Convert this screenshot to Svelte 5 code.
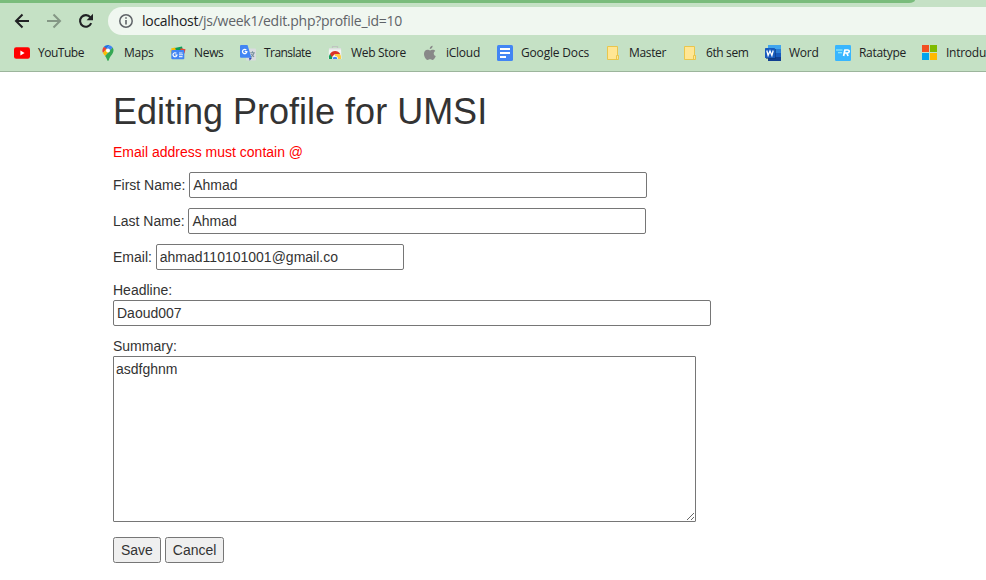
<script>
  const bookmarks = [
    { name: 'YouTube', icon: 'youtube', width: 86, text: 46 },
    { name: 'Maps', icon: 'maps', width: 70, text: 29.5 },
    { name: 'News', icon: 'news', width: 70, text: 29.5 },
    { name: 'Translate', icon: 'translate', width: 87, text: 47 },
    { name: 'Web Store', icon: 'store', width: 95, text: 55 },
    { name: 'iCloud', icon: 'apple', width: 75, text: 34 },
    { name: 'Google Docs', icon: 'docs', width: 108, text: 68 },
    { name: 'Master', icon: 'folder', width: 77, text: 37 },
    { name: '6th sem', icon: 'folder', width: 83, text: 42.5 },
    { name: 'Word', icon: 'word', width: 70, text: 29.5 },
    { name: 'Ratatype', icon: 'ratatype', width: 87, text: 47 },
    { name: 'Introdu', icon: 'microsoft', width: 64, text: 40 }
  ];

  let firstName = $state('Ahmad');
  let lastName = $state('Ahmad');
  let email = $state('ahmad110101001@gmail.co');
  let headline = $state('Daoud007');
  let summary = $state('asdfghnm');

  // Tightens the tracking of a label until it fills the given width.
  function fit(node, width) {
    const natural = node.getBoundingClientRect().width;
    node.style.letterSpacing = `${(width - natural) / node.textContent.length}px`;
  }
</script>

<div class="window">
  <header class="chrome">
    <div class="tabs"><div class="strip"></div></div>
    <div class="toolbar">
      <svg class="nav back" width="16" height="16" viewBox="0 0 16 16" fill="none" stroke="#202124" stroke-width="2"><path d="M15 8H2.5M8.5 1.5L2 8l6.500 6.500" /></svg>
      <svg class="nav forward" width="16" height="16" viewBox="0 0 16 16" fill="none" stroke="#849785" stroke-width="2"><path d="M1 8h12.500M7.500 1.500L14 8l-6.500 6.500" /></svg>
      <svg class="nav reload" width="16" height="16" viewBox="0 0 16 16"><path d="M13.200 10.200A5.800 5.800 0 1 1 12.400 4.300" fill="none" stroke="#202124" stroke-width="2.100" /><path d="M15 .8v6.400H8.600z" fill="#202124" /></svg>
      <div class="address">
        <svg width="14" height="14" viewBox="0 0 14 14"><circle cx="7" cy="7" r="6.200" fill="none" stroke="#5f6368" stroke-width="1.500" /><path d="M6.200 6h1.600v4.500H6.200zM6.200 3.300h1.600v1.500H6.200z" fill="#5f6368" /></svg>
        <span class="url" use:fit={260}><b>localhost</b>/js/week1/edit.php?profile_id=10</span>
      </div>
    </div>
    <nav class="bookmarks">
      {#each bookmarks as b}
        <div class="bookmark" style:width="{b.width}px">
          <svg width="16" height="16" viewBox="0 0 16 16">
            {#if b.icon === 'youtube'}
              <rect y="2.300" width="16" height="11.500" rx="2.200" fill="#f00" /><path d="M6.400 5.500v5L10.600 8z" fill="#fff" />
            {:else if b.icon === 'maps'}
              <path d="M8 0a5.600 5.600 0 0 0-4.300 2L6 4l3.700-3.700A6 6 0 0 0 8 0z" fill="#1a73e8" />
              <path d="M3.700 2a5.600 5.600 0 0 0-.7 6l4-4.700z" fill="#ea4335" />
              <path d="M9.700.3a5.600 5.600 0 0 1 3 2.300L9.500 6.500 6 4z" fill="#4285f4" />
              <path d="M3 8c.5 1.100 1.300 2 2.100 3L10 5.500 6.200 4.200z" fill="#fbbc04" />
              <path d="M12.700 2.600c1.500 2.500.8 4.800-.7 6.800-1.500 2-2.500 3.200-3 5.100-.2.900-.4 1.300-1 1.300s-.8-.5-1-1.300c-.4-1.400-1-2.400-1.900-3.500z" fill="#34a853" />
              <circle cx="8" cy="5.500" r="2" fill="#fff" />
            {:else if b.icon === 'news'}
              <path d="M3.500 3.200L12 1.600l1 4H4z" fill="#0c9d58" />
              <path d="M1 3.500l4-.9 1 3H2z" fill="#fbbc04" />
              <path d="M10.500 3.300l5 1-1 4.200-4-1z" fill="#ea4335" />
              <path d="M.5 5l1-.6.5 4H1z" fill="#fbbc04" />
              <rect x="1.300" y="5" width="13" height="9.300" rx="1" fill="#4285f4" />
              <path d="M6.400 8.300A2 2 0 1 0 7 10H5.200" fill="none" stroke="#fff" stroke-width="1.200" />
              <path d="M9 8h3.500M9 9.800h4M9 11.600h3.500" stroke="#e3edfd" stroke-width="1.100" />
            {:else if b.icon === 'translate'}
              <rect x="6" y="3.500" width="10" height="12" rx="1" fill="#dadce0" /><path d="M9 12.800H12l-2.300 3z" fill="#3949ab" />
              <path d="M1 0h6.500L11.500 12.800H1a1 1 0 0 1-1-1V1a1 1 0 0 1 1-1z" fill="#4285f4" />
              <path d="M6.300 5A2.200 2.200 0 1 0 6.900 6.600H4.700" fill="none" stroke="#fff" stroke-width="1.200" />
              <path d="M10.300 7.700h4.500M12.500 6.300v1.400M14 7.900c-.5 2-1.700 3.200-2.800 4M11.300 9c.7 1.200 1.500 2 2.800 2.700" fill="none" stroke="#78909c" stroke-width="1.100" />
            {:else if b.icon === 'store'}
              <path d="M5.500 3V1.500h5V3" fill="none" stroke="#bfc5c0" stroke-width="1.200" />
              <path d="M2 3h12l.5 11h-13z" fill="#f3f4f4" /><path d="M2 3h12v1.500H2z" fill="#dddfdf" />
              <path d="M2 14a6 6 0 0 1 1.300-5.500L7 14z" fill="#0f9d58" />
              <path d="M14 14a6 6 0 0 0-1-5H8v5z" fill="#ffcd40" />
              <path d="M3 9a5.800 5.800 0 0 1 10.200 0H8l-3.200 3z" fill="#db3328" />
              <path d="M5 14a3 3 0 0 1 6 0z" fill="#fff" /><path d="M5.700 14a2.300 2.300 0 0 1 4.600 0z" fill="#4285f4" />
            {:else if b.icon === 'apple'}
              <path d="M10.600.8c.2 1.700-1.200 3.200-2.800 3.200-.2-1.600 1.200-3 2.800-3.200z" fill="#888" />
              <path d="M13.300 5.900c-2.300 1.400-1.900 4.300.5 5.200-.6 1.700-1.800 3.700-3.200 3.800-1 .1-1.400-.6-2.500-.6s-1.500.6-2.500.6c-1.900-.1-3.700-3.800-3.600-6.200.1-2.400 1.700-3.900 3.500-3.900 1 0 1.900.7 2.600.7.600 0 1.700-.8 3-.7 1 .1 1.700.5 2.200 1.100z" fill="#888" />
            {:else if b.icon === 'docs'}
              <rect width="16" height="16" rx="1.500" fill="#4285f4" /><path d="M3 3h10v2H3zM3 7h10v2H3zM3 11h6v2H3z" fill="#fff" />
            {:else if b.icon === 'folder'}
              <path d="M2.500 1.500h10v9h1v4h-11z" fill="#ffe694" stroke="#e9c64c" /><path d="M11.500 14v-3.500h2V14" fill="#ffe694" stroke="#e9c64c" />
            {:else if b.icon === 'word'}
              <path d="M3 0h13v4H3z" fill="#41a5ee" /><path d="M3 4h13v4H3z" fill="#2b7cd3" /><path d="M3 8h13v4H3z" fill="#185abd" /><path d="M3 12h13v4H3z" fill="#103f91" />
              <rect x="1" y="4" width="10" height="10" fill="#0d3577" opacity=".6" />
              <rect y="3" width="10" height="10" rx=".6" fill="#185abd" /><path d="M1.800 5.500l1.300 5L5 6l1.900 4.500 1.300-5" fill="none" stroke="#fff" stroke-width="1.300" />
            {:else if b.icon === 'ratatype'}
              <rect width="16" height="16" rx="1.200" fill="#38b6ff" /><path d="M1 5h6.500M3 7.800h4" stroke="#a9f5f5" stroke-width="1.100" />
              <path d="M8.600 11l1.300-6h2.700c2.400 0 2 3-.3 3H9.800M11.700 8l1.400 3" fill="none" stroke="#fff" stroke-width="1.700" />
            {:else}
              <path d="M0 0h7v7H0z" fill="#f25022" /><path d="M8 0h7v7H8z" fill="#7fba00" /><path d="M0 8h7v7H0z" fill="#00a4ef" /><path d="M8 8h7v7H8z" fill="#ffb900" />
            {/if}
          </svg>
          <span use:fit={b.text}>{b.name}</span>
        </div>
      {/each}
    </nav>
  </header>

  <main>
    <h1>Editing Profile for UMSI</h1>
    <p class="error">Email address must contain @</p>
    <form onsubmit={(e) => e.preventDefault()}>
      <p>First Name: <input type="text" class="name" bind:value={firstName} spellcheck="false" /></p>
      <p>Last Name: <input type="text" class="name" bind:value={lastName} spellcheck="false" /></p>
      <p>Email: <input type="text" class="email" bind:value={email} spellcheck="false" /></p>
      <p>Headline:<br /><input type="text" class="headline" bind:value={headline} spellcheck="false" /></p>
      <p class="summary">Summary:<br /><textarea bind:value={summary} spellcheck="false"></textarea></p>
      <p class="actions"><button type="submit">Save</button> <button type="button">Cancel</button></p>
    </form>
  </main>
</div>

<style>
  :global(body) { background: #fff; overflow: hidden; }
  .window { width: 986px; height: 580px; overflow: hidden; background: #fff; }
  .chrome {
    box-sizing: border-box;
    height: 72px;
    background: #c5e1c5;
    border-bottom: 1px solid #9cb59c;
    font-family: "Open Sans", "Noto Sans", sans-serif;
  }
  .tabs { height: 7px; }
  .strip { width: 915px; height: 3px; background: #7abc7c; border-bottom-right-radius: 6px 3px; }
  .toolbar { display: flex; align-items: center; height: 28px; padding-left: 14px; }
  .nav { flex: none; margin-right: 16px; }
  .reload { margin-right: 14px; }
  .address {
    flex: 1;
    display: flex;
    align-items: center;
    height: 28px;
    padding-left: 11px;
    border-radius: 14px 0 0 14px;
    background: #f0f7f0;
  }
  .url { margin-left: 9px; font-size: 14px; line-height: 20px; color: #5f6368; white-space: nowrap; }
  .url b { font-weight: 400; color: #202124; }
  .bookmarks { display: flex; align-items: center; height: 36px; padding-left: 14px; }
  .bookmark { flex: none; display: flex; align-items: center; gap: 8px; font-size: 12px; line-height: 16px; color: #202124; white-space: nowrap; }
  .bookmark svg { flex: none; }

  main { padding: 20px 113px 0; font: 14px/20px "Liberation Sans", Arial, sans-serif; color: #333; }
  h1 { margin: 0 0 10px; font-size: 36px; line-height: 40px; font-weight: 400; }
  p { margin: 0 0 10px; }
  .error { color: #f00; }
  input, textarea, button { margin: 0; box-sizing: border-box; font: inherit; color: inherit; }
  input { height: 26px; padding: 1px 2px 1px 3px; border: 1px solid #767676; border-radius: 2px; background: #fff; }
  .name { width: 458px; }
  .email { width: 248px; }
  .headline { width: 598px; }
  textarea { display: block; width: 583px; height: 166px; padding: 2px; border: 1px solid #767676; border-radius: 1px; background: #fff; }
  .summary { margin-bottom: 15px; }
  button { height: 26px; padding: 1px 7px; border: 1px solid #767676; border-radius: 2.500px; background: #efefef; }
</style>
